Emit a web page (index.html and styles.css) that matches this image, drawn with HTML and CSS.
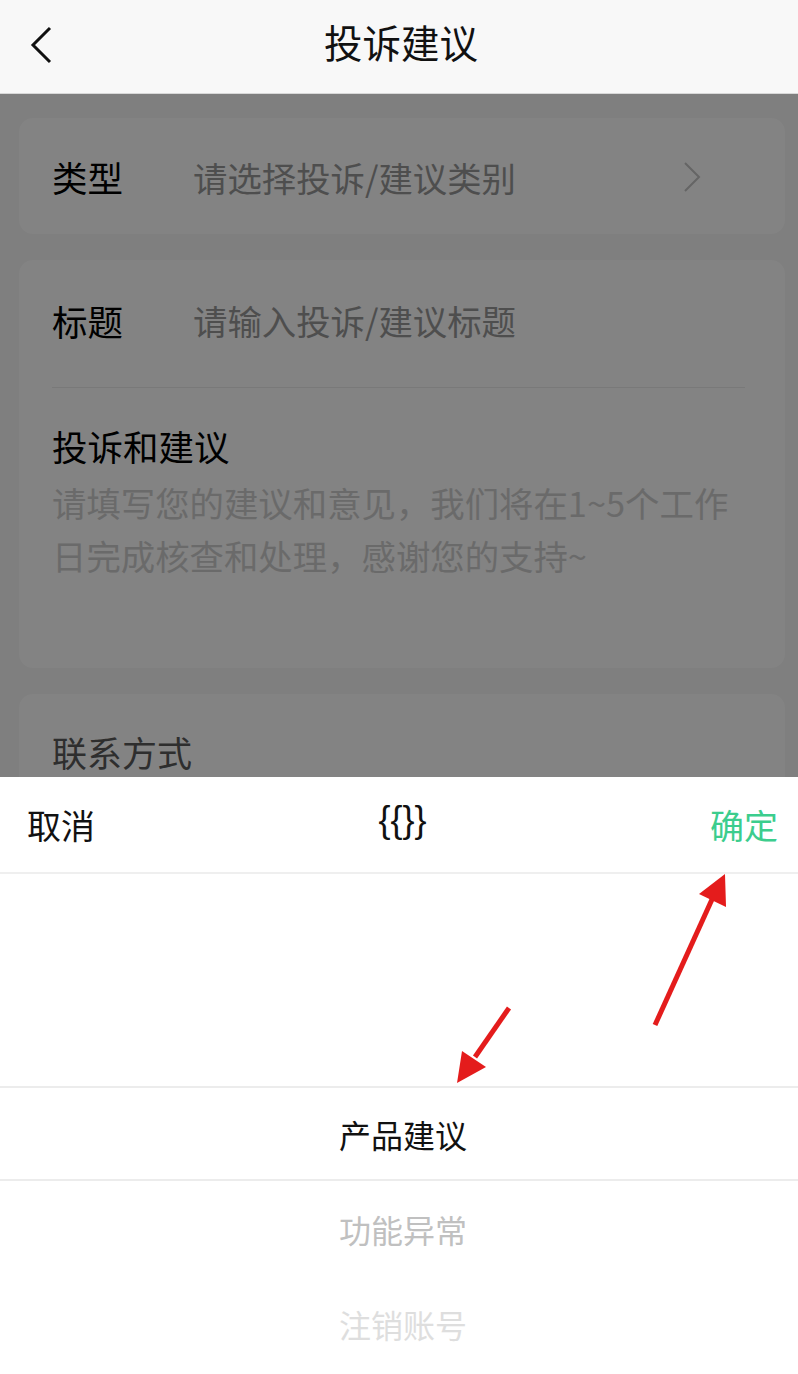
FILE: index.html
```html
<!DOCTYPE html>
<html lang="zh-CN">
<head>
<meta charset="utf-8">
<title>投诉建议</title>
<link rel="stylesheet" href="styles.css">
</head>
<body>
<div class="app">
  <header class="navbar">
    <svg class="back" width="30" height="40" viewBox="0 0 30 40"><path d="M23 3 L6 20 L23 37" fill="none" stroke="#111" stroke-width="3"/></svg>
    <h1 class="title">投诉建议</h1>
  </header>
  <main class="content">
    <section class="card card-type">
      <div class="row">
        <span class="label">类型</span>
        <span class="placeholder">请选择投诉/建议类别</span>
        <svg class="chev" width="20" height="32" viewBox="0 0 20 32"><path d="M3 2 L17 16 L3 30" fill="none" stroke="#c4c4c4" stroke-width="2"/></svg>
      </div>
    </section>
    <section class="card card-main">
      <div class="row row-title">
        <span class="label">标题</span>
        <span class="placeholder">请输入投诉/建议标题</span>
      </div>
      <div class="divider"></div>
      <div class="block">
        <div class="label">投诉和建议</div>
        <p class="textarea">请填写您的建议和意见，我们将在1~5个工作日完成核查和处理，感谢您的支持~</p>
      </div>
    </section>
    <section class="card card-contact">
      <div class="label label-soft">联系方式</div>
    </section>
  </main>
  <div class="mask"></div>
  <div class="sheet">
    <div class="sheet-head">
      <span class="cancel">取消</span>
      <span class="sheet-title">{{}}</span>
      <span class="ok">确定</span>
    </div>
    <div class="picker">
      <div class="item selected">产品建议</div>
      <div class="item i2">功能异常</div>
      <div class="item i3">注销账号</div>
    </div>
  </div>
  <svg class="arrows" width="798" height="1374" viewBox="0 0 798 1374">
    <line x1="509" y1="1008" x2="475" y2="1057" stroke="#e41c1c" stroke-width="5"/>
    <polygon points="457,1083 462,1051 486,1067" fill="#e41c1c"/>
    <line x1="655" y1="1025" x2="714" y2="895" stroke="#e41c1c" stroke-width="5"/>
    <polygon points="725,874 699,894 726,907" fill="#e41c1c"/>
  </svg>
</div>
</body>
</html>
```
FILE: styles.css
```css
* { box-sizing: border-box; }
html, body { margin: 0; padding: 0; }
body {
  width: 798px;
  height: 1374px;
  overflow: hidden;
  font-family: "Noto Sans CJK SC", "Noto Sans", sans-serif;
  background: #f7f7f7;
}
.app { position: relative; width: 798px; height: 1374px; overflow: hidden; }

.navbar {
  height: 94px;
  background: #f8f8f8;
  border-bottom: 1px solid #d8d8d8;
  display: flex;
  align-items: center;
  justify-content: center;
  position: relative;
}
.back { position: absolute; left: 27px; top: 25px; }
.title {
  margin: 0;
  font-size: 38.5px;
  font-weight: 400;
  color: #111;
  line-height: 1;
  margin-top: -10px;
  margin-left: 4px;
}

.content {
  padding: 24px 13px 0 13px;
  display: flex;
  flex-direction: column;
  gap: 26px;
}
.card {
  background: #fff;
  border-radius: 14px;
  margin-left: 6px;
}
.card-type { height: 116px; display: flex; align-items: center; }
.row {
  display: flex;
  align-items: center;
  width: 100%;
  padding-left: 33px;
}
.label {
  font-size: 35.5px;
  color: #000;
  line-height: 1;
}
.row .label { width: 141px; }
.placeholder {
  font-size: 34.4px;
  color: #999;
  line-height: 1;
  flex: 1;
}
.card-type .row { padding-top: 2px; }
.chev { margin-right: 83px; margin-top: 0; }

.card-main { height: 408px; padding: 0 40px 0 33px; }
.row-title { padding-left: 0; height: 127px; padding-bottom: 6px; }
.divider { height: 1px; background: #ececec; }
.block { padding-top: 40px; }
.textarea {
  margin: 12px 0 0;
  font-size: 34.4px;
  line-height: 53px;
  color: #cfcfcf;
  width: 680px;
}

.card-contact { height: 200px; padding: 40px 33px; }
.label-soft { color: #5a5a5a; font-size: 35px; }

.mask {
  position: absolute;
  left: 0; right: 0; top: 94px; bottom: 0;
  background: rgba(0, 0, 0, 0.486);
}

.sheet {
  position: absolute;
  left: 0; right: 0; bottom: 0;
  top: 777px;
  background: #fff;
}
.sheet-head {
  height: 97px;
  border-bottom: 2px solid #efefef;
  display: flex;
  align-items: center;
  justify-content: space-between;
  padding: 0 20px 0 27px;
  font-size: 34px;
  line-height: 1;
}
.cancel { color: #111; }
.sheet-title { color: #111; font-size: 36px; font-family: "Liberation Sans", sans-serif; margin-top: -10px; }
.ok { color: #3ccd8d; }

.picker { padding-top: 212px; }
.item {
  height: 95px;
  display: flex;
  align-items: center;
  justify-content: center;
  padding-left: 8px;
  font-size: 32px;
  line-height: 1;
}
.selected {
  color: #111;
  border-top: 2px solid #ececec;
  border-bottom: 2px solid #ececec;
}
.i2 { color: #c0c0c0; }
.i3 { color: #dedede; }

.arrows { position: absolute; left: 0; top: 0; pointer-events: none; }
```
